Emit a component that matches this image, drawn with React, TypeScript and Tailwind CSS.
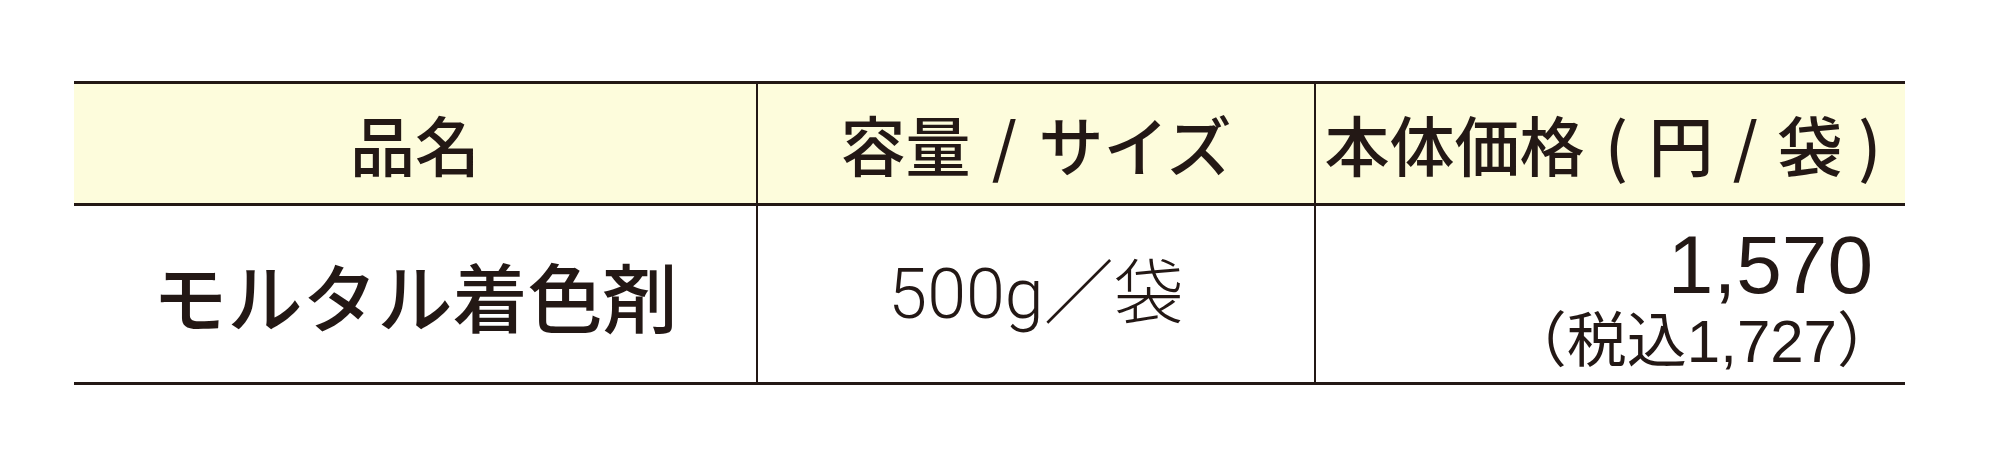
const jp = "font-['Noto_Sans_CJK_JP',sans-serif]";
const num = "font-['Liberation_Sans','Noto_Sans_CJK_JP',sans-serif]";

export default function App() {
  return (
    <div className="min-h-[476px] w-[1999px] bg-white pt-[81px] text-[#231815]">
      <div className="ml-[74px] w-[1831px] border-y-[3px] border-[#231815]">
        <div className={`grid grid-cols-[682px_558px_591px] bg-[#fdfcdc] border-b-[3px] border-[#231815] ${jp}`}>
          <div className="flex h-[119px] items-center justify-center text-[65px] font-medium leading-none">
            品名
          </div>
          <div className="flex h-[119px] items-center justify-center border-l-2 border-[#231815] text-[65px] font-medium leading-none">
            容量<span className="inline-block w-[68px] text-center">/</span>サイズ
          </div>
          <div className="flex h-[119px] items-center justify-center border-l-2 border-[#231815] text-[65px] font-medium leading-none">
            本体価格
            <span className="inline-block w-[64px] text-center">(</span>円
            <span className="inline-block w-[64px] text-center">/</span>袋
            <span className="inline-block w-[54px] text-center">)</span>
          </div>
        </div>

        <div className="grid grid-cols-[682px_558px_591px]">
          <div className={`flex h-[176px] items-center justify-center text-[75px] font-medium leading-none ${jp}`}>
            モルタル着色剤
          </div>
          <div className="flex h-[176px] items-center justify-center border-l-2 border-[#231815] font-['Roboto','Noto_Sans_CJK_JP',sans-serif] text-[70px] font-light leading-none">
            500g／袋
          </div>
          <div className={`flex h-[176px] flex-col items-end justify-center border-l-2 border-[#231815] pr-[8px] pt-[8px] leading-none ${num}`}>
            <div className="mr-[24px] text-[82px] leading-none">1,570</div>
            <div className="mt-[6px] text-[60px] leading-none">（税込1,727）</div>
          </div>
        </div>
      </div>
    </div>
  );
}
